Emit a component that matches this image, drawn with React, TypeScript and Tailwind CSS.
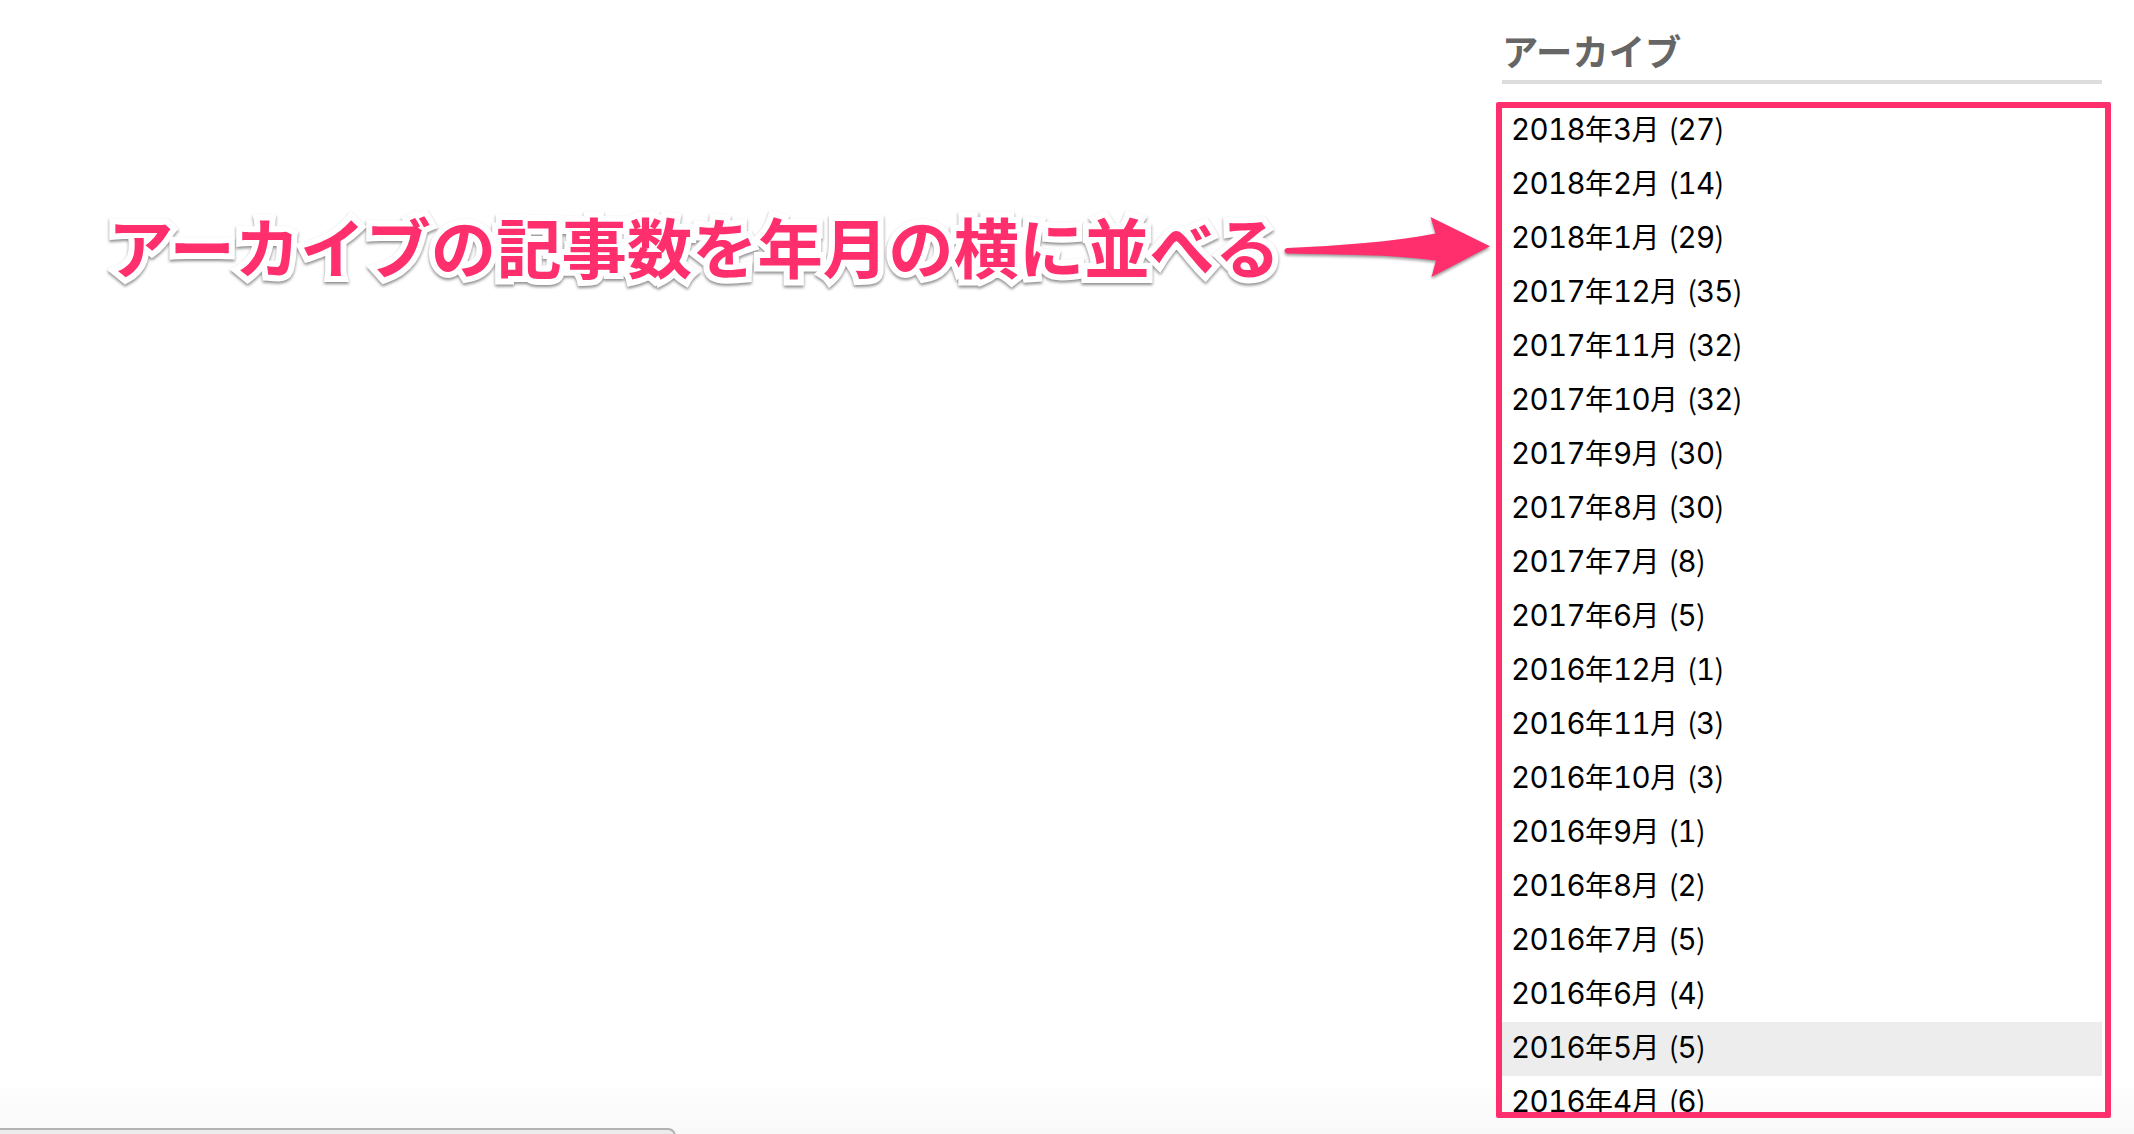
const archives: [number, number, number][] = [
  [2018, 3, 27],
  [2018, 2, 14],
  [2018, 1, 29],
  [2017, 12, 35],
  [2017, 11, 32],
  [2017, 10, 32],
  [2017, 9, 30],
  [2017, 8, 30],
  [2017, 7, 8],
  [2017, 6, 5],
  [2016, 12, 1],
  [2016, 11, 3],
  [2016, 10, 3],
  [2016, 9, 1],
  [2016, 8, 2],
  [2016, 7, 5],
  [2016, 6, 4],
  [2016, 5, 5],
  [2016, 4, 6],
];

function Kanji({ children }: { children: string }) {
  return (
    <span className="w-[28px] font-['Noto_Sans_CJK_JP',sans-serif] text-[28px] tracking-normal">
      {children}
    </span>
  );
}

function Paren({ children }: { children: string }) {
  return (
    <span className="w-[8.5px] font-['Noto_Sans_CJK_JP',sans-serif] text-[28px] tracking-normal">
      {children}
    </span>
  );
}

function ArchiveRow({ year, month, count }: { year: number; month: number; count: number }) {
  const highlighted = year === 2016 && month === 5;
  return (
    <li
      className={`flex h-[54px] shrink-0 items-baseline px-[9px] leading-[48px] ${highlighted ? 'bg-[#ededed]' : ''}`}
    >
      <span>{year}</span>
      <Kanji>年</Kanji>
      <span>{month}</span>
      <Kanji>月</Kanji>
      <span className="ml-[9.5px] flex items-baseline">
        <Paren>(</Paren>
        <span>{count}</span>
        <Paren>)</Paren>
      </span>
    </li>
  );
}

function Arrow() {
  return (
    <svg
      className="mt-[205px] h-[85px] w-[220px] shrink-0 drop-shadow-[0_2px_1.5px_rgba(0,0,0,0.4)]"
      viewBox="1280 205 220 85"
      fill="#ff2f6e"
    >
      <path d="M1287.500 248C1340 245.500 1392 242 1435.500 233.500L1430.500 217L1490 246.200L1431.500 277L1436 260.500C1390 254 1340 255 1287.500 253.500C1283.500 253 1283.500 248.500 1287.500 248Z" />
    </svg>
  );
}

export default function App() {
  return (
    <main className="relative flex h-[1134px] w-[2134px] overflow-hidden bg-[linear-gradient(to_bottom,#fff_0,#fff_1080px,#f8f8f8_1134px)] font-['Inter','Noto_Sans_CJK_JP',sans-serif]">
      <section className="flex w-[1502px] shrink-0 pl-[108px]">
        <p className="mt-[195px] h-[100px] w-[1172px] shrink-0 whitespace-nowrap font-['Noto_Sans_CJK_JP',sans-serif] text-[65.35px] leading-[100px] font-bold text-[#ff2f6e] drop-shadow-[0_2px_1.5px_rgba(0,0,0,0.45)] [-webkit-text-stroke:12px_white] [paint-order:stroke_fill] [stroke-linejoin:round]">
          アーカイブの記事数を年月の横に並べる
        </p>
        <Arrow />
      </section>

      <aside className="flex h-[1112px] w-[600px] flex-col overflow-hidden">
        <h2 className="h-[84px] shrink-0 border-b-4 border-[#dddddd] pt-[21px] font-['Noto_Sans_CJK_JP',sans-serif] text-[36.3px] leading-[58px] font-bold text-[#666]">
          アーカイブ
        </h2>
        <ul className="mt-5 flex flex-col text-[29.5px] font-normal tracking-[-0.65px] text-black tabular-nums">
          {archives.map(([year, month, count]) => (
            <ArchiveRow key={`${year}-${month}`} year={year} month={month} count={count} />
          ))}
        </ul>
      </aside>

      <div className="pointer-events-none absolute top-[102px] left-[1496px] h-[1016px] w-[615px] rounded-[2px] border-[6px] border-[#ff2f6e]" />
      <div className="absolute top-[1128px] -left-1 h-10 w-[680px] rounded-tr-[8px] border-2 border-[#b2b2b2] bg-[#ececec]" />
    </main>
  );
}
